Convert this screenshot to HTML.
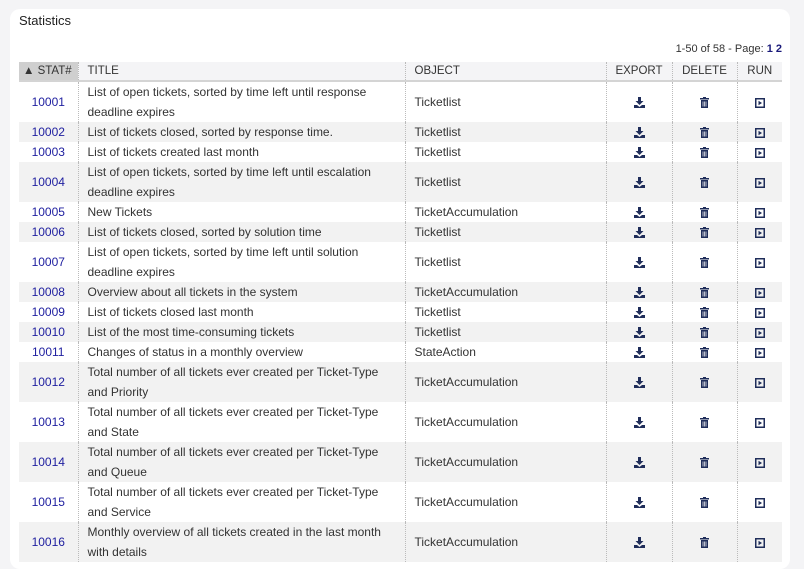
<!DOCTYPE html>
<html><head><style>
html,body{margin:0;padding:0;}
body{width:804px;height:531px;overflow:hidden;background:#f4f4f6;font-family:"Liberation Sans",sans-serif;font-size:12px;color:#333;position:relative;}
.card{position:absolute;left:10px;top:9px;width:780px;height:560px;background:#fff;border-radius:10px;}
.h{position:absolute;left:19px;top:13px;font-size:13px;color:#222;}
.pg{position:absolute;right:22px;top:43px;font-size:11px;color:#333;}
.pg b{color:#1a1a7a;}
table{position:absolute;left:19px;top:62px;width:763px;border-collapse:collapse;table-layout:fixed;}
th{height:18px;background:#f4f4f6;font-weight:normal;text-align:left;font-size:11.5px;color:#333;padding:0 0 0 9px;border-bottom:2px solid #d4d4d4;border-left:1px dotted #bbb;}
th:first-child{background:#cfcfcf;border-left:none;padding-left:4px;}
th.c,td.c{text-align:center;padding:0;}
td{line-height:20px;padding:0 0 0 9px;border-left:1px dotted #bbb;vertical-align:middle;}
td.t{padding-right:22px;}
td:first-child{border-left:none;text-align:center;padding:0;color:#2020a0;}
tr:nth-child(even) td{background:#f2f2f2;}
svg{display:inline-block;vertical-align:middle;}
</style></head><body>
<div class="card"></div>
<div class="h">Statistics</div>
<div class="pg">1-50 of 58 - Page: <b>1</b> <b>2</b></div>
<table>
<colgroup><col style="width:59px"><col style="width:327px"><col style="width:201px"><col style="width:66px"><col style="width:65px"><col style="width:45px"></colgroup>
<thead><tr><th>▲ STAT#</th><th>TITLE</th><th>OBJECT</th><th class="c">EXPORT</th><th class="c">DELETE</th><th class="c">RUN</th></tr></thead>
<tbody id="tb"></tbody>
</table>
<script>
var rows=[
["10001","List of open tickets, sorted by time left until response deadline expires","Ticketlist"],
["10002","List of tickets closed, sorted by response time.","Ticketlist"],
["10003","List of tickets created last month","Ticketlist"],
["10004","List of open tickets, sorted by time left until escalation deadline expires","Ticketlist"],
["10005","New Tickets","TicketAccumulation"],
["10006","List of tickets closed, sorted by solution time","Ticketlist"],
["10007","List of open tickets, sorted by time left until solution deadline expires","Ticketlist"],
["10008","Overview about all tickets in the system","TicketAccumulation"],
["10009","List of tickets closed last month","Ticketlist"],
["10010","List of the most time-consuming tickets","Ticketlist"],
["10011","Changes of status in a monthly overview","StateAction"],
["10012","Total number of all tickets ever created per Ticket-Type and Priority","TicketAccumulation"],
["10013","Total number of all tickets ever created per Ticket-Type and State","TicketAccumulation"],
["10014","Total number of all tickets ever created per Ticket-Type and Queue","TicketAccumulation"],
["10015","Total number of all tickets ever created per Ticket-Type and Service","TicketAccumulation"],
["10016","Monthly overview of all tickets created in the last month with details","TicketAccumulation"]];
var ex='<svg width="11" height="11" viewBox="0 0 11 11"><path d="M4 0h3v4h2.5L5.5 8 1.5 4H4z" fill="#1f2d5a"/><path d="M0 8h3l2.5 2L8 8h3v3H0z" fill="#1f2d5a"/></svg>';
var de='<svg width="9" height="11" viewBox="0 0 9 11"><path d="M0 1h3V0h3v1h3v1.5H0z M1 3h7v8H1z" fill="#1f2d5a"/><path d="M3 4.5v5M4.5 4.5v5M6 4.5v5" stroke="#fff" stroke-width=".7"/></svg>';
var ru='<svg width="10" height="10" viewBox="0 0 10 10"><rect x=".75" y=".75" width="8.5" height="8.5" fill="none" stroke="#1f2d5a" stroke-width="1.5"/><path d="M3.5 2.8L7 5 3.5 7.2z" fill="#1f2d5a"/></svg>';
var h='';rows.forEach(function(r){h+='<tr><td>'+r[0]+'</td><td class="t">'+r[1]+'</td><td>'+r[2]+'</td><td class="c">'+ex+'</td><td class="c">'+de+'</td><td class="c">'+ru+'</td></tr>';});
document.getElementById('tb').innerHTML=h;
</script>
</body></html>
